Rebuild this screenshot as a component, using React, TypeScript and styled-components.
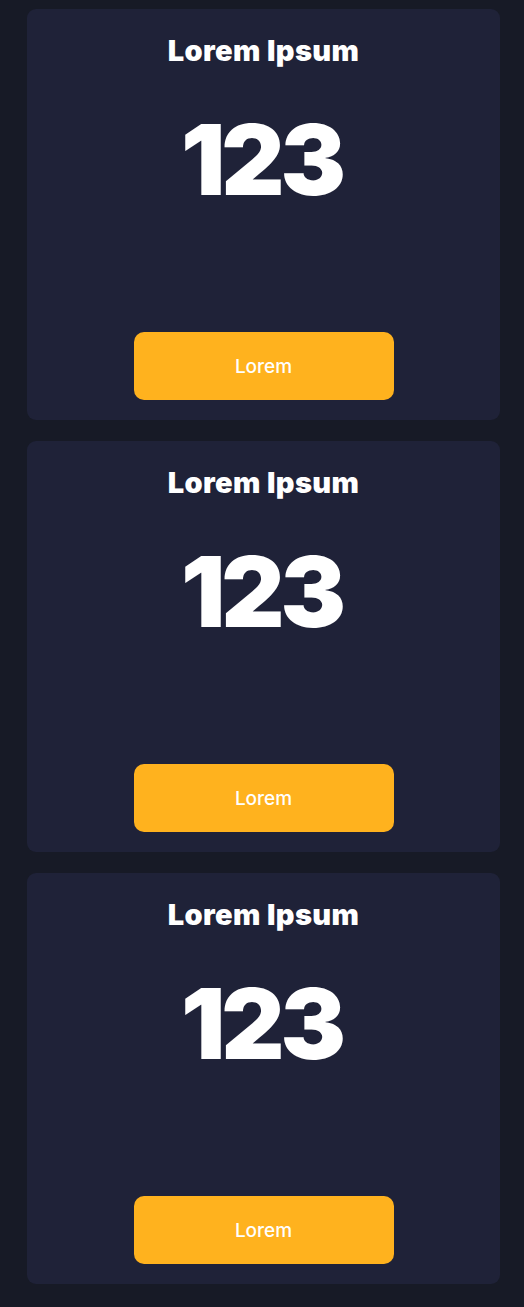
import React from "react";
import styled, { createGlobalStyle } from "styled-components";

const Global = createGlobalStyle`
  html, body { margin: 0; padding: 0; background: #171a26; }
  body { font-family: Inter, "Noto Sans", sans-serif; }
`;

const Page = styled.div`
  display: flex;
  flex-direction: column;
  gap: 21px;
  padding: 9px 24px 23px 27px;
  background: #171a26;
  min-height: 1307px;
  box-sizing: border-box;
`;

const Card = styled.section`
  height: 411px;
  box-sizing: border-box;
  background: #1f2238;
  border-radius: 9px;
  display: flex;
  flex-direction: column;
  align-items: center;
  padding: 24px 0 20px;
`;

const Title = styled.h2`
  margin: 0;
  font-family: Inter, sans-serif;
  font-weight: 900;
  font-size: 29px;
  line-height: 36px;
  color: #ffffff;
  letter-spacing: 0.4px;
`;

const Value = styled.div`
  margin-top: 39px;
  font-family: Inter, sans-serif;
  font-weight: 900;
  font-size: 98px;
  line-height: 104px;
  color: #ffffff;
  letter-spacing: -4px;
  padding-right: 4px;
`;

const Button = styled.button`
  margin-top: auto;
  width: 260px;
  height: 68px;
  border: none;
  border-radius: 10px;
  background: #ffb21e;
  color: #ffffff;
  font-family: Inter, sans-serif;
  font-weight: 500;
  font-size: 19px;
  cursor: pointer;
`;

const items = [1, 2, 3];

export default function App() {
  return (
    <>
      <Global />
      <Page>
        {items.map((i) => (
          <Card key={i}>
            <Title>Lorem Ipsum</Title>
            <Value>123</Value>
            <Button>Lorem</Button>
          </Card>
        ))}
      </Page>
    </>
  );
}
